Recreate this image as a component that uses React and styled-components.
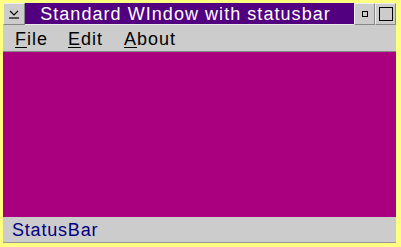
import React from "react";
import styled, { createGlobalStyle } from "styled-components";

const Global = createGlobalStyle`
  html, body { margin: 0; padding: 0; background: #ffffff; }
  * { box-sizing: border-box; }
`;

const Frame = styled.div`
  width: 401px;
  height: 247px;
  border: 3px solid #ffff80;
  border-right-width: 5px;
  border-bottom-width: 4px;
  background: #cccccc;
  display: flex;
  flex-direction: column;
  font-family: "Liberation Sans", Arial, sans-serif;
`;

const TitleBar = styled.div`
  height: 22px;
  display: flex;
  border-bottom: 1px solid #e8e8e8;
`;

const TitleButton = styled.div`
  width: ${p => p.$w || 22}px;
  height: 22px;
  background: #cccccc;
  border: 1px solid #888888;
  border-top-color: #eeeeee;
  border-left-color: #eeeeee;
  display: flex;
  align-items: center;
  justify-content: center;
  flex: none;
`;

const Title = styled.div`
  flex: 1;
  background: #520080;
  color: #ffffff;
  font-size: 18px;
  line-height: 22px;
  text-align: center;
  white-space: nowrap;
  letter-spacing: 1.05px;
  padding-right: 8px;
`;

const MenuBar = styled.div`
  height: 27px;
  display: flex;
  align-items: center;
  padding-left: 12px;
  border-bottom: 1px solid #888888;
`;

const MenuItem = styled.div`
  font-size: 18px;
  letter-spacing: 1px;
  color: #000000;
  margin-right: ${p => p.$mr}px;
  line-height: 20px;
  padding-top: 2px;
`;

const Mnemonic = styled.span`
  text-decoration: underline;
  text-underline-offset: 2px;
`;

const Canvas = styled.div`
  flex: 1;
  background: #aa0080;
`;

const StatusBar = styled.div`
  height: 26px;
  display: flex;
  align-items: center;
  padding-left: 9px;
  color: #000080;
  font-size: 18px;
  letter-spacing: 0.8px;
  padding-top: 2px;
  border-bottom: 1px solid #999999;
`;

export default function App() {
  return (
    <>
      <Global />
      <Frame>
        <TitleBar>
          <TitleButton>
            <svg width="14" height="12" viewBox="0 0 14 12">
              <path d="M3 3 L7 7 L11 3" stroke="#000" strokeWidth="1.2" fill="none" />
              <line x1="2" y1="10" x2="12" y2="10" stroke="#000" strokeWidth="1.2" />
            </svg>
          </TitleButton>
          <Title>Standard WIndow with statusbar</Title>
          <TitleButton $w={21}>
            <svg width="6" height="6" viewBox="0 0 6 6">
              <rect x="0.5" y="0.5" width="5" height="5" fill="none" stroke="#000" />
            </svg>
          </TitleButton>
          <TitleButton $w={21}>
            <svg width="14" height="14" viewBox="0 0 14 14">
              <rect x="0.5" y="0.5" width="13" height="13" fill="none" stroke="#000" />
            </svg>
          </TitleButton>
        </TitleBar>
        <MenuBar>
          <MenuItem $mr={20}><Mnemonic>F</Mnemonic>ile</MenuItem>
          <MenuItem $mr={21}><Mnemonic>E</Mnemonic>dit</MenuItem>
          <MenuItem $mr={0}><Mnemonic>A</Mnemonic>bout</MenuItem>
        </MenuBar>
        <Canvas />
        <StatusBar>StatusBar</StatusBar>
      </Frame>
    </>
  );
}
